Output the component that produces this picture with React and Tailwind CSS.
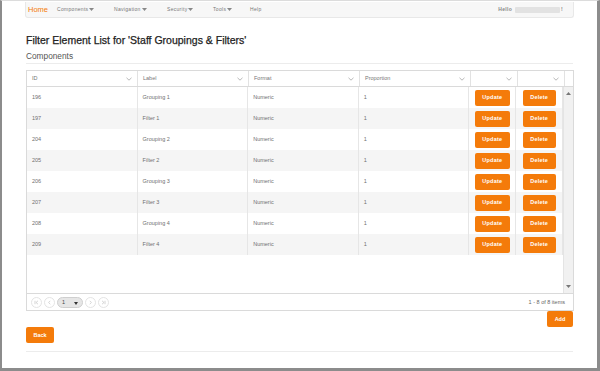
const rows = [
  { id: 196, label: 'Grouping 1' },
  { id: 197, label: 'Filter 1' },
  { id: 204, label: 'Grouping 2' },
  { id: 205, label: 'Filter 2' },
  { id: 206, label: 'Grouping 3' },
  { id: 207, label: 'Filter 3' },
  { id: 208, label: 'Grouping 4' },
  { id: 209, label: 'Filter 4' },
];

const Chevron = () => (
  <svg width="6" height="4" viewBox="0 0 6 4" className="flex-shrink-0">
    <path d="M0.5 0.8 L3 3.2 L5.5 0.8" fill="none" stroke="#9a9a9a" strokeWidth="0.7" />
  </svg>
);

const Caret = () => (
  <svg width="5" height="3" viewBox="0 0 5 3" className="ml-[1px]">
    <path d="M0 0 L5 0 L2.5 3 Z" fill="#888" />
  </svg>
);

const HeadCell = ({ label, w }) => (
  <div className={`${w} h-full flex items-center justify-between px-[5px] border-r border-[#e2e2e2]`}>
    <span>{label}</span>
    <Chevron />
  </div>
);

const OrangeBtn = ({ children, w }) => (
  <button className={`${w} h-[16px] bg-[#f47b0a] rounded-[2px] text-white text-[5.5px] font-bold tracking-[0.2px] flex items-center justify-center`}>
    {children}
  </button>
);

const PagerBtn = ({ children }) => (
  <div className="w-[11px] h-[11px] rounded-full border border-[#e4e4e4] flex items-center justify-center">
    {children}
  </div>
);

export default function App() {
  return (
    <div className="w-[600px] h-[371px] bg-white border-l-2 border-r-[3px] border-b-[3px] border-t border-[#8c8c8c] border-t-[#dcdcdc] overflow-hidden font-['Liberation_Sans',Arial,sans-serif]">
      {/* Navbar */}
      <div className="mx-[23px] mt-[1px] h-[16px] bg-[#f7f7f7] border border-t-0 border-[#e8e8e8] rounded-b-[3px] flex items-center pl-[2px] pr-[10px] text-[#777] text-[5px] tracking-[0.3px]">
        <span className="text-[#f47b0a] text-[7.5px] tracking-normal mr-[9px]">Home</span>
        <span className="flex items-center w-[57px]">Components<Caret /></span>
        <span className="flex items-center w-[53px]">Navigation<Caret /></span>
        <span className="flex items-center w-[46px]">Security<Caret /></span>
        <span className="flex items-center w-[37px]">Tools<Caret /></span>
        <span>Help</span>
        <span className="ml-auto flex items-center font-bold text-[#888]">
          Hello
          <span className="ml-[3px] w-[45px] h-[6px] bg-[#e2e2e2] rounded-[1px]" />
          <span className="ml-[1px]">!</span>
        </span>
      </div>

      <div className="mx-[24px]">
        {/* Heading */}
        <h1 className="mt-[16px] text-[10.5px] leading-[12px] text-[#222] [-webkit-text-stroke:0.25px_#222]">
          Filter Element List for 'Staff Groupings &amp; Filters'
        </h1>
        <h2 className="mt-[5px] text-[8.3px] leading-[10px] text-[#555]">Components</h2>
        <div className="mt-[2px] border-t border-[#ececec]" />

        {/* Grid */}
        <div className="mt-[6px] w-[548px] border border-[#dadada]">
          <div className="h-[16px] flex border-b border-[#dadada] text-[5.5px] text-[#777]">
            <HeadCell label="ID" w="w-[111px]" />
            <HeadCell label="Label" w="w-[111px]" />
            <HeadCell label="Format" w="w-[111px]" />
            <HeadCell label="Proportion" w="w-[111px]" />
            <HeadCell label="" w="w-[47px]" />
            <HeadCell label="" w="w-[47px]" />
            <div className="flex-1" />
          </div>

          <div className="h-[207px] flex border-b border-[#dadada]">
            <div className="w-[536px] text-[5.5px] text-[#707070]">
              {rows.map((r, i) => (
                <div key={r.id} className={`h-[21px] flex ${i % 2 === 1 ? 'bg-[#f5f5f5]' : 'bg-white'}`}>
                  <div className="w-[111px] px-[5px] flex items-center border-r border-[#e6e6e6]">{r.id}</div>
                  <div className="w-[111px] px-[5px] flex items-center border-r border-[#e6e6e6]">{r.label}</div>
                  <div className="w-[111px] px-[5px] flex items-center border-r border-[#e6e6e6]">Numeric</div>
                  <div className="w-[111px] px-[5px] flex items-center border-r border-[#e6e6e6]">1</div>
                  <div className="w-[47px] flex items-center justify-center border-r border-[#e6e6e6]">
                    <OrangeBtn w="w-[35px]">Update</OrangeBtn>
                  </div>
                  <div className="w-[47px] flex items-center justify-center border-r border-[#e6e6e6]">
                    <OrangeBtn w="w-[33px]">Delete</OrangeBtn>
                  </div>
                </div>
              ))}
            </div>
            <div className="flex-1 bg-[#f1f1f1] border-l border-[#e4e4e4] flex flex-col items-center justify-between py-[5px]">
              <svg width="5" height="3" viewBox="0 0 5 3"><path d="M0 3 L5 3 L2.5 0 Z" fill="#777" /></svg>
              <svg width="5" height="3" viewBox="0 0 5 3"><path d="M0 0 L5 0 L2.5 3 Z" fill="#777" /></svg>
            </div>
          </div>

          {/* Pager */}
          <div className="h-[16px] flex items-center pl-[4px] pr-[8px] text-[5.5px] text-[#555]">
            <div className="flex items-center gap-[2px] text-[#bbb]">
              <PagerBtn>
                <svg width="5" height="5" viewBox="0 0 5 5"><path d="M1 0.8 V4.2 M4 0.8 L2 2.5 L4 4.2" fill="none" stroke="#bbb" strokeWidth="0.6" /></svg>
              </PagerBtn>
              <PagerBtn>
                <svg width="5" height="5" viewBox="0 0 5 5"><path d="M3.3 0.8 L1.6 2.5 L3.3 4.2" fill="none" stroke="#bbb" strokeWidth="0.6" /></svg>
              </PagerBtn>
              <div className="w-[26px] h-[11px] rounded-full border border-[#cfcfcf] bg-[#e6e6e6] flex items-center justify-between px-[4px] text-[#444]">
                <span>1</span>
                <svg width="4" height="3" viewBox="0 0 4 3" className="mt-[2px]"><path d="M0 0 L4 0 L2 3 Z" fill="#333" /></svg>
              </div>
              <PagerBtn>
                <svg width="5" height="5" viewBox="0 0 5 5"><path d="M1.7 0.8 L3.4 2.5 L1.7 4.2" fill="none" stroke="#bbb" strokeWidth="0.6" /></svg>
              </PagerBtn>
              <PagerBtn>
                <svg width="5" height="5" viewBox="0 0 5 5"><path d="M4 0.8 V4.2 M1 0.8 L3 2.5 L1 4.2" fill="none" stroke="#bbb" strokeWidth="0.6" /></svg>
              </PagerBtn>
            </div>
            <span className="ml-auto text-[#666]">1 - 8 of 8 items</span>
          </div>
        </div>

        {/* Actions */}
        <div className="flex justify-end">
          <button className="w-[26px] h-[16px] bg-[#f47b0a] rounded-[2px] text-white text-[5.5px] font-bold">Add</button>
        </div>
        <div className="flex">
          <button className="w-[28px] h-[16px] bg-[#f47b0a] rounded-[2px] text-white text-[5.5px] font-bold">Back</button>
        </div>
        <div className="mt-[8px] border-t border-[#ececec]" />
      </div>
    </div>
  );
}
